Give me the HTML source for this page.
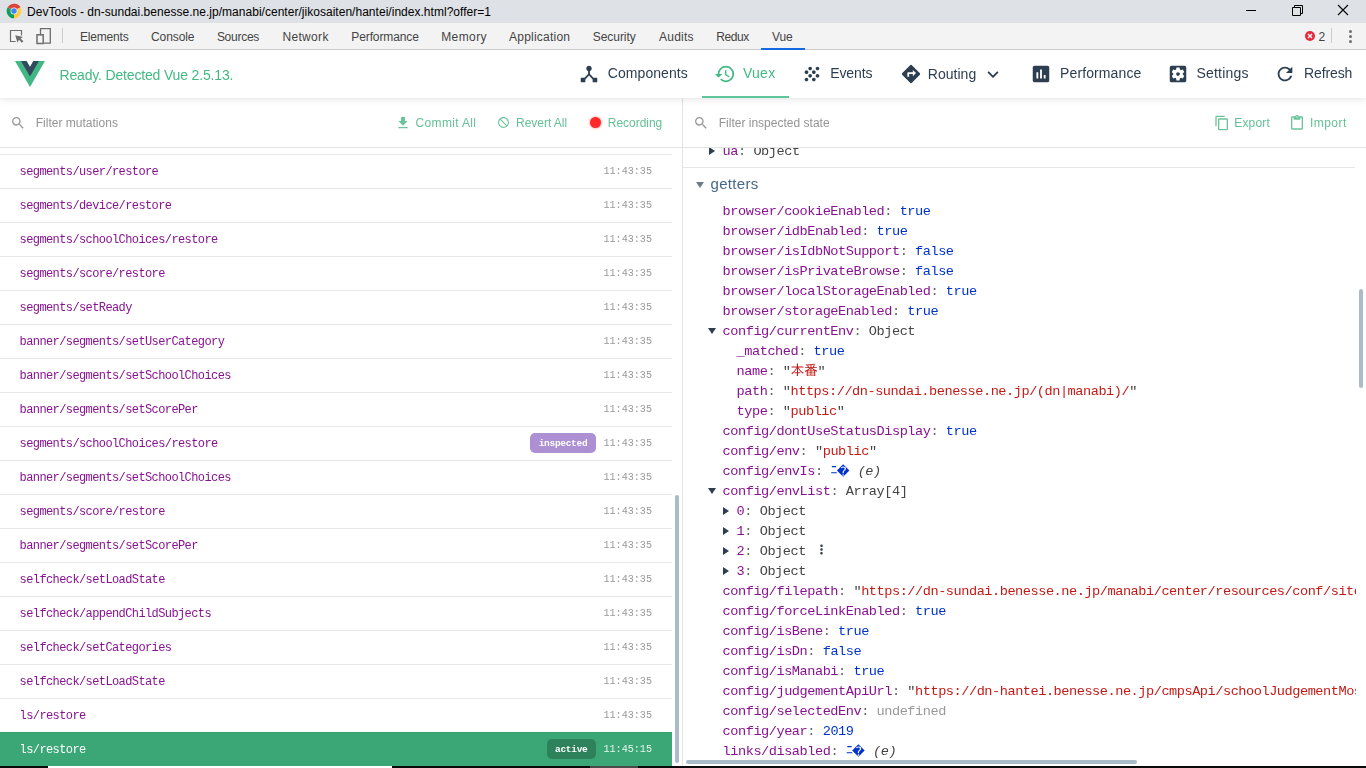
<!DOCTYPE html>
<html lang="en">
<head>
<meta charset="utf-8">
<title>DevTools - dn-sundai.benesse.ne.jp/manabi/center/jikosaiten/hantei/index.html?offer=1</title>
<style>
*{box-sizing:border-box;margin:0;padding:0}
html,body{width:1366px;height:768px;overflow:hidden;background:#fff}
body{position:relative;font-family:"Liberation Sans",sans-serif;color:#2c3e50}
.abs{position:absolute}
svg{display:block}
span,div{white-space:nowrap}
/* window title bar */
#titlebar{left:0;top:0;width:1366px;height:23px;background:#dee1e6}
#titlebar .ttl{left:27px;top:5px;font-size:12px;line-height:15px;color:#000}
/* devtools tab bar */
#dtbar{left:0;top:23px;width:1366px;height:27px;background:#f3f3f3;border-bottom:1px solid #cbcbcb;z-index:6}
#dtbar .t{position:absolute;top:7px;font-size:12px;line-height:15px;color:#444}
/* vue header */
#vhead{will-change:transform;left:0;top:50px;width:1366px;height:48px;background:#fff;box-shadow:0 0 8px rgba(0,0,0,.15);z-index:5}
#vhead .msg{left:60px;top:15px;font-size:14px;line-height:20px;color:#42b983}
#vhead .tab{position:absolute;top:13px;font-size:14px;line-height:20px;color:#2c3e50}
#vhead .tab.on{color:#42b983}
/* action toolbars */
.bar{position:absolute;left:0;top:0;width:100%;height:50px;background:#fff;border-bottom:1px solid #e3e3e3}
.bar .ph{position:absolute;top:17px;font-size:12px;line-height:16px;color:#949494}
.bar .btn{position:absolute;top:17px;font-size:12px;line-height:16px;color:#64c196}
/* left list */
#left{will-change:transform;left:0;top:98px;width:682px;height:668px;background:#fff;overflow:hidden}
.row{position:absolute;left:0;width:672px;height:34px;border-top:1px solid #e7e7e7;font-family:"Liberation Mono",monospace}
.row .n{position:absolute;left:19.6px;top:10px;font-size:12px;letter-spacing:-0.6px;line-height:15px;color:#881391}
.row .tm{position:absolute;left:603.5px;top:9px;font-size:10.1px;line-height:15px;color:#999}
.row.act{background:#3ba776;border-top-color:#389f70}
.row.act .n{color:#fff}.row.act .tm{color:#e6f5ee}
.lbl{position:absolute;top:6px;height:20px;border-radius:5px;font-size:9.5px;letter-spacing:-0.3px;line-height:22px;font-weight:bold;color:#fff;text-align:center}
/* right tree */
#right{will-change:transform;left:683px;top:98px;width:683px;height:668px;background:#fff;overflow:hidden}
#split{left:682px;top:98px;width:1px;height:668px;background:#e3e3e3}
#tree{left:0;top:50px;width:673px;height:612px;overflow:hidden}
.ln{position:absolute;height:20px;font-family:"Liberation Mono","Noto Sans CJK JP",monospace;font-size:13.6px;letter-spacing:-0.46px;line-height:20px;white-space:pre;color:#444}
.ln span{white-space:pre}
.k{color:#881391}.c{color:#666}.b{color:#03c}.s{color:#c41a16}.u{color:#999}.o{color:#444}
.cell{display:inline-block;width:7.7px;text-align:center;overflow:visible}
.ln i{color:#444}
.j{font-family:"Liberation Mono","IPAGothic","Noto Sans CJK JP",monospace;font-size:14px;line-height:14px}
.j.cell{width:7px}
.q{font-family:"DejaVu Sans",sans-serif;font-size:12.5px;line-height:14px;width:12.6px!important;position:relative;top:1px;left:-0.8px}
.sec{font-size:15px;line-height:20px;color:#486887}
</style>
</head>
<body>
<div id="titlebar" class="abs">
<svg class="abs" style="left:5.5px;top:3px" width="16" height="16" viewBox="0 0 48 48"><circle cx="24" cy="24" r="22" fill="#fff"/><path d="M24 24 L4.9 13 A22 22 0 0 1 43.1 13 Z" fill="#db4437"/><path d="M24 24 L43.1 13 A22 22 0 0 1 24 46 Z" fill="#ffcd40"/><path d="M24 24 L24 46 A22 22 0 0 1 4.9 13 Z" fill="#0f9d58"/><path d="M24 2 A22 22 0 0 1 43.1 13 L24 13 Z" fill="#db4437"/><circle cx="24" cy="24" r="10.5" fill="#f1f1f1"/><circle cx="24" cy="24" r="8.2" fill="#4285f4"/></svg>
<div class="ttl abs" style="letter-spacing:0.027px">DevTools - dn-sundai.benesse.ne.jp/manabi/center/jikosaiten/hantei/index.html?offer=1</div>
<svg class="abs" style="left:1240px;top:0" width="126" height="23" viewBox="0 0 126 23"><path d="M6 10.5h10" stroke="#000" stroke-width="1" fill="none"/><path d="M52.5 7.5h8v8h-8z M54.5 7.5v-2h8v8h-2" stroke="#000" stroke-width="1" fill="none"/><path d="M98 5l10 10M108 5l-10 10" stroke="#000" stroke-width="1.1" fill="none"/></svg>
</div>
<div id="dtbar" class="abs">
<svg class="abs" style="left:8px;top:4px" width="60" height="20" viewBox="0 0 60 20"><path d="M7.6 14.5H2.5V3.5H13.5V8.6" stroke="#6e6e6e" stroke-width="1.2" fill="none"/><path d="M7.2 8.2L9.4 15.4 11 12.8 13.8 15.8 15.4 14.2 12.6 11.4 15 9.9z" fill="#6e6e6e"/><path d="M32.5 8.5V1.7H42.3V16.2H35.5" stroke="#6e6e6e" stroke-width="1.3" fill="none"/><path d="M29 7.8h6.2v8.6H29z" stroke="#6e6e6e" stroke-width="1.5" fill="none"/><path d="M54.5 1v15" stroke="#ccc" stroke-width="1"/></svg>
<span class="t" style="left:80.0px;letter-spacing:-0.19px">Elements</span><span class="t" style="left:151.0px;letter-spacing:-0.089px">Console</span><span class="t" style="left:216.9px;letter-spacing:-0.272px">Sources</span><span class="t" style="left:282.5px;letter-spacing:0.314px">Network</span><span class="t" style="left:351.3px;letter-spacing:-0.11px">Performance</span><span class="t" style="left:441.2px;letter-spacing:0.411px">Memory</span><span class="t" style="left:509.0px;letter-spacing:0.228px">Application</span><span class="t" style="left:592.8px;letter-spacing:-0.066px">Security</span><span class="t" style="left:659.0px;letter-spacing:0.228px">Audits</span><span class="t" style="left:716.2px;letter-spacing:-0.422px">Redux</span><span class="t" style="left:771.9px;letter-spacing:-0.003px">Vue</span>
<div class="abs" style="left:761px;top:25px;width:44px;height:2px;background:#1269e0"></div>
<svg class="abs" style="left:1300px;top:4px" width="66" height="20" viewBox="0 0 66 20"><circle cx="10" cy="9" r="5" fill="#e8293b"/><path d="M8 7l4 4M12 7l-4 4" stroke="#fff" stroke-width="1.3"/><path d="M31.5 1v15" stroke="#ccc" stroke-width="1"/><circle cx="50.5" cy="4.5" r="1.5" fill="#6e6e6e"/><circle cx="50.5" cy="9.5" r="1.5" fill="#6e6e6e"/><circle cx="50.5" cy="14.5" r="1.5" fill="#6e6e6e"/></svg>
<span class="t" style="left:1318.5px">2</span>
</div>
<div id="vhead" class="abs">
<svg class="abs" style="left:15px;top:11px" width="30" height="26" viewBox="0 0 261.76 226.69"><path d="M161.096.001l-30.225 52.351L100.647.001H-.005l130.877 226.688L261.749.001z" fill="#41b883"/><path d="M161.096.001l-30.225 52.351L100.647.001H52.346l78.526 136.01L209.398.001z" fill="#34495e"/></svg>
<div class="msg abs" style="left:59.5px;letter-spacing:-0.167px">Ready. Detected Vue 2.5.13.</div>
<svg class="abs" style="left:577.75px;top:13px" width="22" height="22" viewBox="0 0 24 24"><path d="M17 16l-4-4V8.82C14.16 8.4 15 7.3 15 6c0-1.66-1.34-3-3-3S9 4.34 9 6c0 1.3.84 2.4 2 2.82V12l-4 4H3v5h5v-3.05l4-4.2 4 4.2V21h5v-5h-4z" fill="#2c3e50"/></svg><span class="tab" style="left:607.8px;top:13px;letter-spacing:0.068px">Components</span>
<svg class="abs" style="left:714.3px;top:13px" width="22" height="22" viewBox="0 0 24 24"><path d="M13 3a9 9 0 0 0-9 9H1l3.89 3.89.07.14L9 12H6c0-3.87 3.13-7 7-7s7 3.13 7 7-3.13 7-7 7c-1.93 0-3.68-.79-4.94-2.06l-1.42 1.42A8.954 8.954 0 0 0 13 21a9 9 0 0 0 0-18zm-1 5v5l4.28 2.54.72-1.21-3.5-2.08V8H12z" fill="#42b983"/></svg><span class="tab on" style="left:742.9px;top:13px;letter-spacing:0.303px">Vuex</span>
<svg class="abs" style="left:800.5px;top:13px" width="22" height="22" viewBox="0 0 24 24"><path d="M10 12c-1.1 0-2 .9-2 2s.9 2 2 2 2-.9 2-2-.9-2-2-2zM6 8c-1.1 0-2 .9-2 2s.9 2 2 2 2-.9 2-2-.9-2-2-2zm0 8c-1.1 0-2 .9-2 2s.9 2 2 2 2-.9 2-2-.9-2-2-2zm12-8c1.1 0 2-.9 2-2s-.9-2-2-2-2 .9-2 2 .9 2 2 2zm-4 8c-1.1 0-2 .9-2 2s.9 2 2 2 2-.9 2-2-.9-2-2-2zm4-4c-1.1 0-2 .9-2 2s.9 2 2 2 2-.9 2-2-.9-2-2-2zm-4-4c-1.1 0-2 .9-2 2s.9 2 2 2 2-.9 2-2-.9-2-2-2zm-4-4c-1.1 0-2 .9-2 2s.9 2 2 2 2-.9 2-2-.9-2-2-2z" fill="#2c3e50"/></svg><span class="tab" style="left:830.3px;top:13px;letter-spacing:-0.142px">Events</span>
<svg class="abs" style="left:899.9px;top:13px" width="22" height="22" viewBox="0 0 24 24"><path d="M21.71 11.29l-9-9a.996.996 0 0 0-1.41 0l-9 9a.996.996 0 0 0 0 1.41l9 9c.39.39 1.02.39 1.41 0l9-9a.996.996 0 0 0 0-1.41zM14 14.5V12h-4v3H8v-4c0-.55.45-1 1-1h5V7.5l3.5 3.5-3.5 3.5z" fill="#2c3e50"/></svg><span class="tab" style="left:927.8px;top:14px;letter-spacing:0.022px">Routing</span>
<svg class="abs" style="left:1030.15px;top:13px" width="22" height="22" viewBox="0 0 24 24"><path d="M19 3H5c-1.1 0-2 .9-2 2v14c0 1.1.9 2 2 2h14c1.1 0 2-.9 2-2V5c0-1.1-.9-2-2-2zM9 17H7v-7h2v7zm4 0h-2V7h2v10zm4 0h-2v-4h2v4z" fill="#2c3e50"/></svg><span class="tab" style="left:1060.1px;top:13px;letter-spacing:0.104px">Performance</span>
<svg class="abs" style="left:1167px;top:13px" width="22" height="22" viewBox="0 0 24 24"><path d="M12 10c-1.1 0-2 .9-2 2s.9 2 2 2 2-.9 2-2-.9-2-2-2zm7-7H5a2 2 0 0 0-2 2v14a2 2 0 0 0 2 2h14a2 2 0 0 0 2-2V5a2 2 0 0 0-2-2zm-1.75 9c0 .23-.02.46-.05.68l1.48 1.16c.13.11.17.3.08.45l-1.4 2.42c-.09.15-.27.21-.43.15l-1.74-.7c-.36.28-.76.51-1.18.69l-.26 1.85c-.03.17-.18.3-.35.3h-2.8c-.17 0-.32-.13-.35-.29l-.26-1.85c-.43-.18-.82-.41-1.18-.69l-1.74.7c-.16.06-.34 0-.43-.15l-1.4-2.42a.353.353 0 0 1 .08-.45l1.48-1.16c-.03-.23-.05-.46-.05-.69 0-.23.02-.46.05-.68l-1.48-1.16a.353.353 0 0 1-.08-.45l1.4-2.42c.09-.15.27-.21.43-.15l1.74.7c.36-.28.76-.51 1.18-.69l.26-1.85c.03-.17.18-.3.35-.3h2.8c.17 0 .32.13.35.29l.26 1.85c.43.18.82.41 1.18.69l1.74-.7c.16-.06.34 0 .43.15l1.4 2.42c.09.15.05.34-.08.45l-1.48 1.16c.03.23.05.46.05.69z" fill="#2c3e50"/></svg><span class="tab" style="left:1196.5px;top:13px;letter-spacing:0.187px">Settings</span>
<svg class="abs" style="left:1274.1px;top:13px" width="22" height="22" viewBox="0 0 24 24"><path d="M17.65 6.35A7.958 7.958 0 0 0 12 4c-4.42 0-7.99 3.58-7.99 8s3.57 8 7.99 8c3.73 0 6.84-2.55 7.73-6h-2.08A5.99 5.99 0 0 1 12 18c-3.31 0-6-2.69-6-6s2.69-6 6-6c1.66 0 3.14.69 4.22 1.78L13 11h7V4l-2.35 2.35z" fill="#2c3e50"/></svg><span class="tab" style="left:1304.1px;top:13px;letter-spacing:-0.139px">Refresh</span>
<svg class="abs" style="left:982px;top:13.6px" width="22" height="22" viewBox="0 0 24 24"><path d="M7.41 7.84L12 12.42l4.59-4.58L18 9.25l-6 6-6-6z" fill="#2c3e50"/></svg>
<div class="abs" style="left:702px;top:46px;width:87px;height:2px;background:#5fc59c"></div>
</div>
<div id="left" class="abs">
<div class="bar">
<svg class="abs" style="left:10px;top:17.4px" width="16" height="16" viewBox="0 0 24 24"><path d="M15.5 14h-.79l-.28-.27A6.471 6.471 0 0 0 16 9.5 6.5 6.5 0 1 0 9.5 16c1.61 0 3.09-.59 4.23-1.57l.27.28v.79l5 4.99L20.49 19l-4.99-5zm-6 0C7.01 14 5 11.99 5 9.5S7.01 5 9.5 5 14 7.01 14 9.5 11.99 14 9.5 14z" fill="#999"/></svg><span class="ph" style="left:35.7px;letter-spacing:0.011px">Filter mutations</span>
<svg class="abs" style="left:394.8px;top:17.3px" width="16" height="16" viewBox="0 0 24 24"><path d="M19 9h-4V3H9v6H5l7 7 7-7zM5 18v2h14v-2H5z" fill="#6cc49c"/></svg><svg class="abs" style="left:496.5px;top:18.25px" width="13" height="13" viewBox="0 0 24 24"><path d="M12 2C6.48 2 2 6.48 2 12s4.48 10 10 10 10-4.48 10-10S17.52 2 12 2zm0 18c-4.42 0-8-3.58-8-8 0-1.85.63-3.55 1.69-4.9L16.9 18.31A7.902 7.902 0 0 1 12 20zm6.31-3.1L7.1 5.69A7.902 7.902 0 0 1 12 4c4.42 0 8 3.58 8 8 0 1.85-.63 3.55-1.69 4.9z" fill="#6cc49c"/></svg><div class="abs" style="left:589.6px;top:19.3px;width:11px;height:11px;border-radius:50%;background:#ff2929;box-shadow:0 0 3px rgba(255,40,40,.6)"></div>
<span class="btn" style="left:415.6px;letter-spacing:0.328px">Commit All</span>
<span class="btn" style="left:516.1px;letter-spacing:-0.04px">Revert All</span>
<span class="btn" style="left:607.8px;letter-spacing:-0.025px">Recording</span>
</div>
<div class="row" style="top:56px"><span class="n">segments/user/restore</span><span class="tm">11:43:35</span></div>
<div class="row" style="top:90px"><span class="n">segments/device/restore</span><span class="tm">11:43:35</span></div>
<div class="row" style="top:124px"><span class="n">segments/schoolChoices/restore</span><span class="tm">11:43:35</span></div>
<div class="row" style="top:158px"><span class="n">segments/score/restore</span><span class="tm">11:43:35</span></div>
<div class="row" style="top:192px"><span class="n">segments/setReady</span><span class="tm">11:43:35</span></div>
<div class="row" style="top:226px"><span class="n">banner/segments/setUserCategory</span><span class="tm">11:43:35</span></div>
<div class="row" style="top:260px"><span class="n">banner/segments/setSchoolChoices</span><span class="tm">11:43:35</span></div>
<div class="row" style="top:294px"><span class="n">banner/segments/setScorePer</span><span class="tm">11:43:35</span></div>
<div class="row" style="top:328px"><span class="n">segments/schoolChoices/restore</span><span class="lbl" style="left:530px;width:66px;background:#ad8fd3">inspected</span><span class="tm">11:43:35</span></div>
<div class="row" style="top:362px"><span class="n">banner/segments/setSchoolChoices</span><span class="tm">11:43:35</span></div>
<div class="row" style="top:396px"><span class="n">segments/score/restore</span><span class="tm">11:43:35</span></div>
<div class="row" style="top:430px"><span class="n">banner/segments/setScorePer</span><span class="tm">11:43:35</span></div>
<div class="row" style="top:464px"><span class="n">selfcheck/setLoadState</span><span class="tm">11:43:35</span></div>
<div class="row" style="top:498px"><span class="n">selfcheck/appendChildSubjects</span><span class="tm">11:43:35</span></div>
<div class="row" style="top:532px"><span class="n">selfcheck/setCategories</span><span class="tm">11:43:35</span></div>
<div class="row" style="top:566px"><span class="n">selfcheck/setLoadState</span><span class="tm">11:43:35</span></div>
<div class="row" style="top:600px"><span class="n">ls/restore</span><span class="tm">11:43:35</span></div>
<div class="row act" style="top:634px"><span class="n">ls/restore</span><span class="lbl" style="left:547px;width:48.5px;background:#2d815b">active</span><span class="tm">11:45:15</span></div>
<div class="abs" style="left:675px;top:397px;width:4px;height:268px;border-radius:2px;background:#a9bcc8"></div>
</div>
<div id="split" class="abs"></div>
<div id="right" class="abs">
<div class="bar">
<svg class="abs" style="left:10px;top:17.4px" width="16" height="16" viewBox="0 0 24 24"><path d="M15.5 14h-.79l-.28-.27A6.471 6.471 0 0 0 16 9.5 6.5 6.5 0 1 0 9.5 16c1.61 0 3.09-.59 4.23-1.57l.27.28v.79l5 4.99L20.49 19l-4.99-5zm-6 0C7.01 14 5 11.99 5 9.5S7.01 5 9.5 5 14 7.01 14 9.5 11.99 14 9.5 14z" fill="#999"/></svg><span class="ph" style="left:35.7px;letter-spacing:0.009px">Filter inspected state</span>
<svg class="abs" style="left:530.6px;top:17px" width="16" height="16" viewBox="0 0 24 24"><path d="M16 1H4c-1.1 0-2 .9-2 2v14h2V3h12V1zm3 4H8c-1.1 0-2 .9-2 2v14c0 1.1.9 2 2 2h11c1.1 0 2-.9 2-2V7c0-1.1-.9-2-2-2zm0 16H8V7h11v14z" fill="#6cc49c"/></svg><svg class="abs" style="left:606.1px;top:17.3px" width="16" height="16" viewBox="0 0 24 24"><path d="M19 2h-4.18C14.4.84 13.3 0 12 0c-1.3 0-2.4.84-2.82 2H5c-1.1 0-2 .9-2 2v16c0 1.1.9 2 2 2h14c1.1 0 2-.9 2-2V4c0-1.1-.9-2-2-2zm-7 0c.55 0 1 .45 1 1s-.45 1-1 1-1-.45-1-1 .45-1 1-1zm7 18H5V4h2v3h10V4h2v16z" fill="#6cc49c"/></svg><span class="btn" style="left:551.3px;letter-spacing:0.162px">Export</span>
<span class="btn" style="left:626.9px;letter-spacing:0.477px">Import</span>
</div>
<div id="tree" class="abs">
<div class="ln" style="left:39.6px;top:-6px"><span class="k">ua</span><span class="c">: </span>Object</div><svg class="abs" style="left:26px;top:-1.2px" width="6" height="8" viewBox="0 0 6 8"><path d="M0 0v8L6 4z" fill="#2c3e50"/></svg>
<div class="abs" style="left:0;top:19px;width:672px;height:1px;background:#e6e6e6"></div>
<svg class="abs" style="left:13px;top:33.5px" width="8" height="6" viewBox="0 0 8 6"><path d="M0 0h8L4 6z" fill="#6e7b88"/></svg><span class="abs sec" style="left:27.5px;top:26px;letter-spacing:0.307px">getters</span>
<div class="ln" style="left:39.6px;top:54px"><span class="k">browser/cookieEnabled</span><span class="c">: </span><span class="b">true</span></div>
<div class="ln" style="left:39.6px;top:74px"><span class="k">browser/idbEnabled</span><span class="c">: </span><span class="b">true</span></div>
<div class="ln" style="left:39.6px;top:94px"><span class="k">browser/isIdbNotSupport</span><span class="c">: </span><span class="b">false</span></div>
<div class="ln" style="left:39.6px;top:114px"><span class="k">browser/isPrivateBrowse</span><span class="c">: </span><span class="b">false</span></div>
<div class="ln" style="left:39.6px;top:134px"><span class="k">browser/localStorageEnabled</span><span class="c">: </span><span class="b">true</span></div>
<div class="ln" style="left:39.6px;top:154px"><span class="k">browser/storageEnabled</span><span class="c">: </span><span class="b">true</span></div>
<div class="ln" style="left:39.6px;top:174px"><span class="k">config/currentEnv</span><span class="c">: </span>Object</div><svg class="abs" style="left:25.1px;top:180.4px" width="8" height="6" viewBox="0 0 8 6"><path d="M0 0h8L4 6z" fill="#2c3e50"/></svg>
<div class="ln" style="left:53.6px;top:194px"><span class="k">_matched</span><span class="c">: </span><span class="b">true</span></div>
<div class="ln" style="left:53.6px;top:214px"><span class="k">name</span><span class="c">: </span>"<span class="s j">本番</span>"</div>
<div class="ln" style="left:53.6px;top:234px"><span class="k">path</span><span class="c">: </span>"<span class="s">https://dn-sundai.benesse.ne.jp/(dn|manabi)/</span>"</div>
<div class="ln" style="left:53.6px;top:254px"><span class="k">type</span><span class="c">: </span>"<span class="s">public</span>"</div>
<div class="ln" style="left:39.6px;top:274px"><span class="k">config/dontUseStatusDisplay</span><span class="c">: </span><span class="b">true</span></div>
<div class="ln" style="left:39.6px;top:294px"><span class="k">config/env</span><span class="c">: </span>"<span class="s">public</span>"</div>
<div class="ln" style="left:39.6px;top:314px"><span class="k">config/envIs</span><span class="c">: </span><span class="b"><span class="cell j">ﾆ</span><span class="cell q">�</span></span> <i>(e)</i></div>
<div class="ln" style="left:39.6px;top:334px"><span class="k">config/envList</span><span class="c">: </span>Array[4]</div><svg class="abs" style="left:25.1px;top:340.4px" width="8" height="6" viewBox="0 0 8 6"><path d="M0 0h8L4 6z" fill="#2c3e50"/></svg>
<div class="ln" style="left:53.6px;top:354px"><span class="k">0</span><span class="c">: </span>Object</div><svg class="abs" style="left:39.8px;top:359px" width="6" height="8" viewBox="0 0 6 8"><path d="M0 0v8L6 4z" fill="#2c3e50"/></svg>
<div class="ln" style="left:53.6px;top:374px"><span class="k">1</span><span class="c">: </span>Object</div><svg class="abs" style="left:39.8px;top:379px" width="6" height="8" viewBox="0 0 6 8"><path d="M0 0v8L6 4z" fill="#2c3e50"/></svg>
<div class="ln" style="left:53.6px;top:394px"><span class="k">2</span><span class="c">: </span>Object</div><svg class="abs" style="left:39.8px;top:399px" width="6" height="8" viewBox="0 0 6 8"><path d="M0 0v8L6 4z" fill="#2c3e50"/></svg>
<div class="ln" style="left:53.6px;top:414px"><span class="k">3</span><span class="c">: </span>Object</div><svg class="abs" style="left:39.8px;top:419px" width="6" height="8" viewBox="0 0 6 8"><path d="M0 0v8L6 4z" fill="#2c3e50"/></svg>
<div class="ln" style="left:39.6px;top:434px"><span class="k">config/filepath</span><span class="c">: </span>"<span class="s">https://dn-sundai.benesse.ne.jp/manabi/center/resources/conf/site.json</span>"</div>
<div class="ln" style="left:39.6px;top:454px"><span class="k">config/forceLinkEnabled</span><span class="c">: </span><span class="b">true</span></div>
<div class="ln" style="left:39.6px;top:474px"><span class="k">config/isBene</span><span class="c">: </span><span class="b">true</span></div>
<div class="ln" style="left:39.6px;top:494px"><span class="k">config/isDn</span><span class="c">: </span><span class="b">false</span></div>
<div class="ln" style="left:39.6px;top:514px"><span class="k">config/isManabi</span><span class="c">: </span><span class="b">true</span></div>
<div class="ln" style="left:39.6px;top:534px"><span class="k">config/judgementApiUrl</span><span class="c">: </span>"<span class="s">https://dn-hantei.benesse.ne.jp/cmpsApi/schoolJudgementMoshi</span>"</div>
<div class="ln" style="left:39.6px;top:554px"><span class="k">config/selectedEnv</span><span class="c">: </span><span class="u">undefined</span></div>
<div class="ln" style="left:39.6px;top:574px"><span class="k">config/year</span><span class="c">: </span><span class="b">2019</span></div>
<div class="ln" style="left:39.6px;top:594px"><span class="k">links/disabled</span><span class="c">: </span><span class="b"><span class="cell j">ﾆ</span><span class="cell q">�</span></span> <i>(e)</i></div>
<svg class="abs" style="left:131.25px;top:394.25px" width="15" height="15" viewBox="0 0 24 24"><path d="M12 8c1.1 0 2-.9 2-2s-.9-2-2-2-2 .9-2 2 .9 2 2 2zm0 2c-1.1 0-2 .9-2 2s.9 2 2 2 2-.9 2-2-.9-2-2-2zm0 6c-1.1 0-2 .9-2 2s.9 2 2 2 2-.9 2-2-.9-2-2-2z" fill="#2c3e50"/></svg></div>
<div class="abs" style="left:676px;top:191px;width:4px;height:99px;border-radius:2px;background:#a9bcc8"></div>
<div class="abs" style="left:3px;top:662px;width:451px;height:4px;border-radius:2px;background:#a9bcc8"></div>
</div>
<div class="abs" style="left:0;top:766px;width:1366px;height:2px;background:#0a0a0a;z-index:9"><div class="abs" style="left:48px;top:0;width:344px;height:2px;background:#fff"></div><div class="abs" style="left:590px;top:0;width:48px;height:2px;background:#4a4a4a"></div></div>
</body>
</html>
